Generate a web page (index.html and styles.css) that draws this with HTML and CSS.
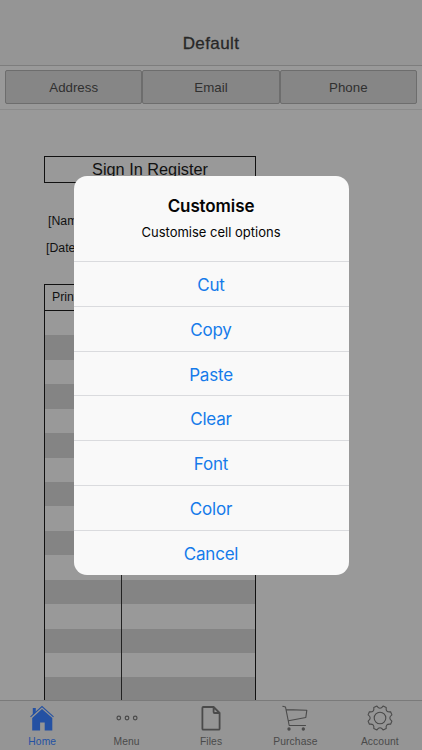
FILE: index.html
```html
<!DOCTYPE html>
<html lang="en">
<head>
	<meta charset="UTF-8">
	<title>Default</title>
	<link rel="stylesheet" href="styles.css">
</head>
<body>
<div class="app">
	<header class="navbar">Default</header>
	<div class="toolbar">
		<button>Address</button>
		<button>Email</button>
		<button>Phone</button>
	</div>
	<main class="sheet">
		<div class="sheet-title">Sign In Register</div>
		<div class="field name">[Name]</div>
		<div class="field date">[Date]</div>
		<div class="table">
			<div class="table-head">Print Name</div>
			<div class="table-body"><div class="col"></div></div>
		</div>
	</main>
	<nav class="tabbar">
		<a class="tab on">
			<svg width="26" height="26" viewBox="0 0 26 26">
				<path d="M3.200 13L13 4l10.300 9v12.600h-7.600v-8h-4.600v8H3.200zM3.800 3h3v4.500l-3 2.800z" fill="currentColor"/>
				<path d="M1.500 11.800L13 1.500l11.500 10.300" fill="none" stroke="currentColor" stroke-width="1.100"/>
			</svg>
			<span>Home</span>
		</a>
		<a class="tab">
			<svg width="26" height="26" viewBox="0 0 26 26" fill="none" stroke="currentColor" stroke-width="1.200">
				<circle cx="4.800" cy="13" r="1.800"/><circle cx="13" cy="13" r="1.800"/><circle cx="21.200" cy="13" r="1.800"/>
			</svg>
			<span>Menu</span>
		</a>
		<a class="tab">
			<svg width="26" height="26" viewBox="0 0 26 26" fill="none" stroke="currentColor" stroke-width="1.800" stroke-linejoin="round">
				<path d="M5.400 2h10.200l6 6v15.700q0 1-1 1H5.400q-1 0-1-1V3q0-1 1-1zM15.600 2v5q0 1 1 1h5"/>
			</svg>
			<span>Files</span>
		</a>
		<a class="tab">
			<svg width="26" height="26" viewBox="0 0 26 26" fill="none" stroke="currentColor" stroke-width="1.100" stroke-linejoin="round" stroke-linecap="round">
				<path d="M.8 1.300l2.700.7L7.200 20.500h16.300M4.200 4.600l20.600.7-1 7.200L6.500 15.800"/>
				<circle cx="7" cy="24" r="1.100" fill="currentColor"/><circle cx="21.300" cy="24" r="1.100" fill="currentColor"/>
			</svg>
			<span>Purchase</span>
		</a>
		<a class="tab">
			<svg width="26" height="26" viewBox="-13 -13 26 26" fill="none" stroke="currentColor" stroke-width="1.100" stroke-linejoin="round">
				<circle cx="0" cy="0" r="5.800"/>
				<path d="M3.100-11.900L6.200-10.600Q5.400-5.400 10.600-6.200L11.900-3.100Q7.700 0 11.900 3.100L10.600 6.200Q5.400 5.400 6.200 10.600L3.100 11.900Q0 7.700-3.100 11.900L-6.200 10.600Q-5.400 5.400-10.600 6.200L-11.900 3.100Q-7.700 0-11.900-3.100L-10.600-6.200Q-5.400-5.400-6.200-10.600L-3.100-11.900Q0-7.700 3.100-11.900z"/>
			</svg>
			<span>Account</span>
		</a>
	</nav>
</div>
<div class="alert">
	<div class="alert-head">
		<h1>Customise</h1>
		<p>Customise cell options</p>
	</div>
	<a class="option">Cut</a>
	<a class="option">Copy</a>
	<a class="option">Paste</a>
	<a class="option">Clear</a>
	<a class="option">Font</a>
	<a class="option">Color</a>
	<a class="option">Cancel</a>
</div>
</body>
</html>
```

FILE: styles.css
```css
*{
	margin: 0;
	padding: 0;
	box-sizing: border-box;
}
body {
	background: #999;
	font-family: "Liberation Sans", Arial, sans-serif;
	overflow: hidden;
}
.app {
	display: flex;
	flex-direction: column;
	height: 750px;
}
.navbar {
	height: 66px;
	padding-top: 33px;
	line-height: 21px;
	text-align: center;
	font-size: 17px;
	letter-spacing: 0.4px;
	color: #272727;
	-webkit-text-stroke: 0.3px #272727;
	background: #959595;
	border-bottom: 1px solid #7d7d7d;
}
.toolbar {
	display: flex;
	height: 44px;
	padding: 4px 5px 5px;
	background: #999;
	border-bottom: 1px solid #8b8b8b;
}
.toolbar button {
	flex: 1;
	height: 34px;
	border: 1px solid #6d6d6d;
	border-radius: 2px;
	background: #868686;
	color: #303030;
	font: 13.3px "Liberation Sans", Arial, sans-serif;
}
/* sheet */
.sheet {
	flex: 1;
	display: flex;
	flex-direction: column;
	width: 256px;
	padding: 46px 0 0 44px;
	overflow: hidden;
	color: #111;
}
.sheet-title {
	height: 27px;
	line-height: 25px;
	border: 1px solid #111;
	text-align: center;
	font-size: 16.3px;
}
.field {
	font-size: 12.3px;
	line-height: 14px;
}
.name {
	margin: 31px 0 0 4px;
}
.date {
	margin: 13px 0 0 2px;
}
.table {
	flex: 1;
	display: flex;
	flex-direction: column;
	margin-top: 29px;
	border: 1px solid #111;
	border-bottom: 0;
}
.table-head {
	height: 26px;
	padding-left: 7px;
	line-height: 25px;
	font-size: 12.3px;
	border-bottom: 1px solid #111;
}
.table-body {
	flex: 1;
	background: repeating-linear-gradient(#999 0 24.43px, #848484 24.43px 48.86px);
}
.col {
	width: 77px;
	height: 100%;
	border-right: 1px solid #222;
}
/* tabs */
.tabbar {
	display: flex;
	height: 50px;
	background: #959595;
	border-top: 1px solid #7a7a7a;
}
.tab {
	flex: 1;
	display: flex;
	flex-direction: column;
	align-items: center;
	padding-top: 4px;
	color: #4a4a4a;
}
.tab span {
	margin-top: 4px;
	font-size: 10.3px;
	line-height: 13px;
	letter-spacing: 0.1px;
}
.tab.on {
	color: #2451a3;
}
/* alert */
.alert {
	position: absolute;
	left: 73.5px;
	top: 175.5px;
	width: 275px;
	height: 399px;
	border-radius: 13px;
	overflow: hidden;
	background: #f9f9f9;
	text-align: center;
	font-family: Inter, sans-serif;
}
.alert-head {
	height: 85.500px;
	padding-top: 20px;
	color: #050505;
}
.alert-head h1 {
	font-size: 17px;
	line-height: 21px;
	font-weight: 600;
	letter-spacing: -0.1px;
}
.alert-head p {
	margin-top: 7px;
	font-size: 13px;
	line-height: 16px;
}
.option {
	display: block;
	height: 44.800px;
	line-height: 46px;
	border-top: 1px solid #dadbde;
	font-size: 17px;
	letter-spacing: -0.2px;
	color: #157bea;
}
```
